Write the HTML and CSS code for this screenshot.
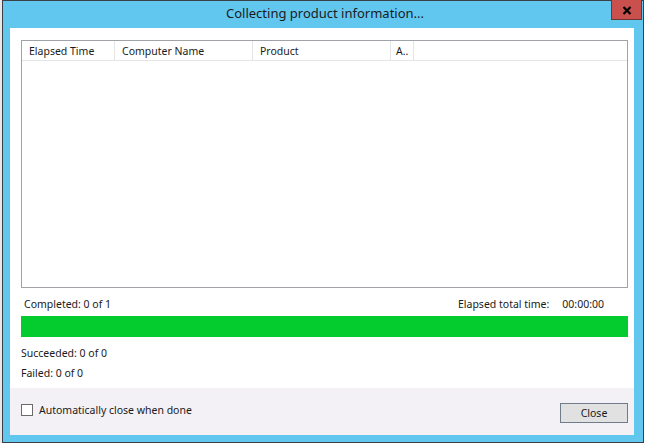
FILE: index.html
```html
<!DOCTYPE html>
<html>
<head>
<meta charset="utf-8">
<link rel="stylesheet" href="styles.css">
</head>
<body>
<div class="desk">
  <div class="window">
    <div class="titlebar">
      <div class="tspacer"></div>
      <div class="title">Collecting product information...</div>
      <div class="tspacer right"><div class="closebtn"><svg class="xicon" width="10" height="9" viewBox="0 0 10 9"><path d="M1.5 1 L8.5 8 M8.5 1 L1.5 8" stroke="#000" stroke-width="2.2" fill="none"/></svg></div></div>
    </div>
    <div class="client">
      <div class="main">
        <div class="list">
          <div class="header">
            <div class="col c1">Elapsed Time</div>
            <div class="col c2">Computer Name</div>
            <div class="col c3">Product</div>
            <div class="col c4">A..</div>
          </div>
        </div>
        <div class="statusrow">
          <span class="completed">Completed: 0 of 1</span>
          <span class="elapsed"><span class="elabel">Elapsed total time:</span><span>00:00:00</span></span>
        </div>
        <div class="progress"></div>
        <div class="line succ">Succeeded: 0 of 0</div>
        <div class="line fail">Failed: 0 of 0</div>
      </div>
      <div class="footer">
        <label class="check"><span class="box"></span><span>Automatically close when done</span></label>
        <div class="btn">Close</div>
      </div>
    </div>
  </div>
</div>
</body>
</html>
```
FILE: styles.css
```css
html, body {
  margin: 0;
  padding: 0;
  background: #ffffff;
}
body {
  width: 647px;
  height: 443px;
  overflow: hidden;
  font-family: "Noto Sans", "Open Sans", sans-serif;
  font-size: 10.5px;
  color: #1a1a1a;
}
.desk {
  padding-left: 2px;
  height: 443px;
  background: linear-gradient(to right, #e8e8e8 0, #e8e8e8 2px, #ffffff 2px);
}
.window {
  box-sizing: border-box;
  width: 642px;
  height: 443px;
  border: 1px solid #3a4046;
  background-color: #62c7ef;
  padding: 0 9px 7px 7px;
  display: flex;
  flex-direction: column;
}
.titlebar {
  height: 27px;
  display: flex;
  flex: none;
}
.tspacer {
  flex: 1;
  display: flex;
  justify-content: flex-end;
  align-items: flex-start;
}
.title {
  font-size: 13px;
  color: #1b1b1b;
  line-height: 27px;
  margin-left: 6px;
  margin-top: -1px;
}
.closebtn {
  width: 31px;
  height: 20px;
  margin-right: -8px;
  margin-top: -1px;
  box-sizing: border-box;
  background: #c9504c;
  border-left: 1px solid #6e3432;
  border-right: 1px solid #6e3432;
  border-bottom: 1px solid #6e3432;
  display: flex;
  align-items: center;
  justify-content: center;
}
.xicon {
  display: block;
  margin-top: 1px;
}
.client {
  flex: 1;
  display: flex;
  flex-direction: column;
  background: #ffffff;
}
.main {
  flex: 1;
  padding: 12px 6px 0 11px;
  display: flex;
  flex-direction: column;
}
.list {
  box-sizing: border-box;
  height: 248px;
  border: 1px solid #a0a4a8;
  background: #fff;
}
.header {
  display: flex;
  height: 19px;
  border-bottom: 1px solid #e5e5e5;
}
.col {
  box-sizing: border-box;
  height: 19px;
  line-height: 19px;
  padding-left: 7px;
  padding-top: 1px;
  border-right: 1px solid #e5e5e5;
  white-space: nowrap;
  overflow: hidden;
  color: #1a1a1a;
}
.c1 { width: 93px; }
.c2 { width: 138px; }
.c3 { width: 138px; }
.c4 { width: 23px; padding-left: 5px; }
.statusrow {
  display: flex;
  justify-content: space-between;
  margin-top: 7px;
  height: 18px;
  line-height: 18px;
  padding-left: 3px;
  padding-right: 24px;
}
.elapsed {
  display: flex;
  gap: 13px;
}
.progress {
  margin-top: 3px;
  height: 21px;
  background: #05cc2e;
}
.line {
  height: 18px;
  line-height: 18px;
}
.succ { margin-top: 7px; }
.fail { margin-top: 2px; }
.footer {
  flex: none;
  height: 47px;
  background: #f3f1f5;
  display: flex;
  align-items: flex-start;
  justify-content: space-between;
  padding: 0 6px 0 11px;
}
.check {
  display: flex;
  align-items: center;
  gap: 6px;
  margin-top: 14px;
  line-height: 16px;
}
.box {
  box-sizing: border-box;
  width: 12px;
  height: 12px;
  border: 1px solid #6b6b6b;
  background: #fff;
}
.btn {
  box-sizing: border-box;
  width: 68px;
  height: 20px;
  border: 1px solid #6f7d8a;
  background: #e1e1e1;
  text-align: center;
  line-height: 18px;
  margin-top: 15px;
}
```
